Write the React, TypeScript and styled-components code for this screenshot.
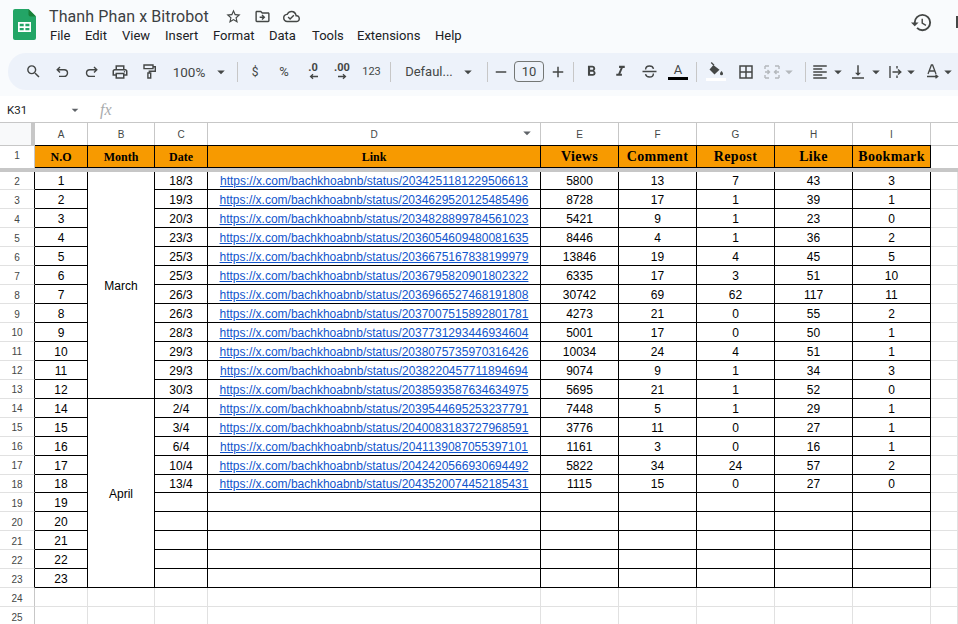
import React from 'react'
import styled, { createGlobalStyle } from 'styled-components'
import {
  MdSearch, MdOutlinePrint, MdArrowDropDown, MdRemove, MdAdd,
  MdFormatBold, MdFormatItalic, MdBorderAll, MdOutlineStarBorder,
  MdOutlineDriveFileMove, MdOutlineCloudDone, MdHistory, MdFormatAlignLeft, MdVerticalAlignBottom,
} from 'react-icons/md'

const GlobalStyle = createGlobalStyle`
  html, body { margin: 0; padding: 0; height: 100%; overflow: hidden; background: #f9fbfd; }
  body { font-family: Roboto, "Liberation Sans", sans-serif; }
`

const Page = styled.div`
  width: 958px;
  height: 624px;
  overflow: hidden;
  display: flex;
  flex-direction: column;
`

const TitleBar = styled.header`
  height: 53px;
  flex: none;
  display: flex;
  padding: 9px 0 0 13px;
  box-sizing: border-box;
`

const TitleBlock = styled.div`
  margin-left: 13px;
  display: flex;
  flex-direction: column;
`

const TitleRow = styled.div`
  display: flex;
  align-items: center;
  height: 14px;
  color: #444746;
`

const Title = styled.span`
  font-size: 16px;
  color: #3c4043;
  letter-spacing: 0.1px;
  width: 170px;
  white-space: nowrap;
`

const TitleIcon = styled.span`
  width: 29px;
  display: flex;
  justify-content: center;
  font-size: 17px;
`

const MenuRow = styled.nav`
  display: flex;
  margin-top: 5px;
  margin-left: 1px;
  height: 14px;
  align-items: center;
`

const MenuItem = styled.span<{ $w: number }>`
  width: ${({ $w }) => $w}px;
  font-size: 13px;
  color: #202124;
  white-space: nowrap;
`

const RightActions = styled.div`
  margin-left: auto;
  display: flex;
  align-items: center;
  height: 26px;
  color: #444746;
  font-size: 23px;
`

const CommentSliver = styled.span`
  width: 2px;
  height: 12px;
  background: #444746;
  margin-left: 23px;
`

const Toolbar = styled.div`
  flex: none;
  height: 37px;
  margin-left: 8px;
  padding-left: 10.5px;
  background: #edf2fa;
  border-radius: 18px 0 0 18px;
  display: flex;
  align-items: center;
  color: #444746;
  overflow: hidden;
`

const Tool = styled.span<{ $w?: number; $muted?: boolean; $size?: number }>`
  flex: none;
  width: ${({ $w }) => $w ?? 29}px;
  height: 24px;
  display: flex;
  align-items: center;
  justify-content: center;
  font-size: ${({ $size }) => $size ?? 18}px;
  color: ${({ $muted }) => ($muted ? '#b4b8bc' : '#444746')};
`

const ToolText = styled.span<{ $size?: number }>`
  font-size: ${({ $size }) => $size ?? 13}px;
  color: #444746;
  white-space: nowrap;
`

const ZoomText = styled(ToolText)`
  font-size: 13.5px;
  margin-left: 6px;
  margin-right: 7px;
`

const FontText = styled(ToolText)`
  margin-left: 5px;
  margin-right: 6px;
`

const Caret = styled(MdArrowDropDown)`
  font-size: 18px;
  flex: none;
`

const Sep = styled.span<{ $w?: number }>`
  flex: none;
  width: ${({ $w }) => $w ?? 7}px;
  display: flex;
  justify-content: center;
  &::before {
    content: '';
    width: 1px;
    height: 20px;
    background: #c7c7c7;
  }
`

const SizeBox = styled.span`
  width: 28px;
  height: 19px;
  border: 1px solid #747775;
  border-radius: 4px;
  display: flex;
  align-items: center;
  justify-content: center;
  font-size: 13px;
  color: #444746;
`

const ColorGlyph = styled.span`
  display: flex;
  flex-direction: column;
  align-items: center;
  line-height: 1;
`

const ColorBar = styled.span<{ $color: string }>`
  display: block;
  width: 20px;
  height: 3px;
  margin-top: 1px;
  background: ${({ $color }) => $color};
`

const DecimalGlyph = styled.span<{ $right?: boolean }>`
  display: flex;
  flex-direction: column;
  align-items: ${({ $right }) => ($right ? 'center' : 'flex-end')};
  font-size: 11px;
  font-weight: 700;
  line-height: 10px;
  color: #444746;
`

const FormulaBar = styled.div`
  flex: none;
  height: 26px;
  margin-top: 6px;
  padding-top: 1px;
  box-sizing: border-box;
  background: #fff;
  display: flex;
  align-items: center;
  padding-left: 7px;
`

const NameBox = styled.span`
  width: 60px;
  font-size: 11.5px;
  color: #202124;
`

const NameCaret = styled(MdArrowDropDown)`
  font-size: 16px;
  color: #5f6368;
`

const Fx = styled.span`
  margin-left: 17px;
  font-family: "Liberation Serif", serif;
  font-style: italic;
  font-size: 16px;
  color: #a8abad;
`

const SheetGrid = styled.div`
  flex: 1;
  display: grid;
  grid-template-columns: 35px 53px 67px 53px 333px 78px 78px 78px 78px 78px 27px;
  grid-template-rows: 23px 22.5px 4px;
  grid-auto-rows: 18.95px;
  background: #fff;
  overflow: hidden;
  font-family: "Liberation Sans", Arial, sans-serif;
`

const Corner = styled.div`
  background: #f8f9fa;
  border-top: 1px solid #c7c7c7;
  border-right: 4px solid #c7c7c7;
  box-sizing: border-box;
`

const ColHead = styled.div`
  position: relative;
  background: #fff;
  border-top: 1px solid #c7c7c7;
  border-right: 1px solid #c7c7c7;
  box-sizing: border-box;
  display: flex;
  align-items: center;
  justify-content: center;
  font-size: 10px;
  color: #444746;
`

const FilterCaret = styled(MdArrowDropDown)`
  position: absolute;
  right: 4px;
  top: 1px;
  font-size: 18px;
  color: #5f6368;
`

const RowLabel = styled.div<{ $dark?: boolean }>`
  background: #fff;
  box-sizing: border-box;
  padding-top: 2px;
  border-right: 1px solid ${({ $dark }) => ($dark ? '#000' : '#c7c7c7')};
  border-bottom: 1px solid #e1e1e1;
  display: flex;
  align-items: center;
  justify-content: center;
  font-size: 10px;
  color: #444746;
`

const RowOneLabel = styled(RowLabel)`
  border-top: 1px solid #c7c7c7;
  border-right: 1px solid #c7c7c7;
  border-bottom: none;
  padding-top: 0;
  padding-bottom: 3px;
`

const HeaderCell = styled.div<{ $size: number; $wide?: boolean }>`
  background: #f79a00;
  box-sizing: border-box;
  border-top: 1px solid #000;
  border-bottom: 1px solid #000;
  border-right: 1px solid #000;
  display: flex;
  align-items: center;
  justify-content: center;
  padding-top: 2px;
  font-family: "Liberation Serif", serif;
  font-weight: 700;
  font-size: ${({ $size }) => $size}px;
  letter-spacing: ${({ $wide }) => ($wide ? '0.35px' : '0')};
  color: #000;
  white-space: nowrap;
`

const Blank = styled.div`
  background: #fff;
  border-top: 1px solid #c7c7c7;
`

const FreezeBar = styled.div`
  grid-column: 1 / -1;
  background: #c7c7c7;
`

const Cell = styled.div`
  box-sizing: border-box;
  padding-top: 2px;
  border-right: 1px solid #000;
  border-bottom: 1px solid #000;
  display: flex;
  align-items: center;
  justify-content: center;
  font-size: 12px;
  color: #000;
  white-space: nowrap;
  overflow: hidden;
`

const MergedCell = styled(Cell)<{ $span: number }>`
  grid-row: span ${({ $span }) => $span};
`

const LinkText = styled.a`
  color: #1155cc;
  text-decoration: underline;
`

const EmptyCell = styled.div`
  box-sizing: border-box;
  border-right: 1px solid #e1e1e1;
  border-bottom: 1px solid #e1e1e1;
`

const SheetsLogo = () => (
  <svg width="23" height="31" viewBox="0 0 23 31">
    <path d="M2 0h13.5L23 7.5V29a2 2 0 0 1-2 2H2a2 2 0 0 1-2-2V2a2 2 0 0 1 2-2z" fill="#23a566" />
    <path d="M15.5 0L23 7.5h-5.5a2 2 0 0 1-2-2z" fill="#188038" />
    <path d="M5 13h13v10H5z M6.7 14.7v2.5h4v-2.5z M12.4 14.7v2.5h4v-2.5z M6.7 18.9v2.4h4v-2.4z M12.4 18.9v2.4h4v-2.4z" fill="#fff" fillRule="evenodd" />
  </svg>
)

const SmallArrow = ({ left }: { left?: boolean }) => (
  <svg width="9" height="7" viewBox="0 0 10 7" style={{ transform: left ? 'scaleX(-1)' : undefined }}>
    <path d="M0 3.5h8M5.5 1L8.3 3.5L5.5 6" fill="none" stroke="#444746" strokeWidth="1.4" />
  </svg>
)

const UndoIcon = ({ flip }: { flip?: boolean }) => (
  <svg width="13" height="12" viewBox="0 0 13 12" fill="none" stroke="#444746" strokeWidth="1.4" style={{ transform: flip ? 'scaleX(-1)' : undefined }}>
    <path d="M4 1L1.2 3.8L4 6.6M1.5 3.8h6.7a3.2 3.2 0 0 1 0 6.6H3" />
  </svg>
)

const PaintIcon = () => (
  <svg width="13" height="15" viewBox="0 0 13 15" fill="none" stroke="#444746" strokeWidth="1.4">
    <path d="M1 1h9v3.6H1zM10 2.8h2.3v4.4H6.3V9M4.9 9h2.8v5H4.9z" />
  </svg>
)

const StrikeIcon = () => (
  <svg width="15" height="13" viewBox="0 0 15 13" fill="none" stroke="#444746" strokeWidth="1.4">
    <path d="M0.5 6.5h14M3.6 4.6C3.6 2.4 5.4 1 7.5 1s3.6 1 4 2.8M11.4 8.4c0 2.2-1.8 3.6-3.9 3.6s-3.6-1-4-2.8" />
  </svg>
)

const MergeIcon = () => (
  <svg width="16" height="14" viewBox="0 0 16 14" fill="none" stroke="#b4b8bc" strokeWidth="1.4">
    <path d="M1 1h4M1 13h4M11 1h4M11 13h4M1 1v3M1 10v3M15 1v3M15 10v3M1 7h4M3.5 5L5.5 7L3.5 9M15 7h-4M12.5 5L10.5 7L12.5 9" />
  </svg>
)

const WrapIcon = () => (
  <svg width="13" height="14" viewBox="0 0 13 14" fill="none" stroke="#444746" strokeWidth="1.4">
    <path d="M1 1v12M8 1v2.5M8 10.5V13M3.5 7h8M9 4.5L11.8 7L9 9.5" />
  </svg>
)

const RotateIcon = () => (
  <svg width="13" height="15" viewBox="0 0 13 15" fill="none" stroke="#444746" strokeWidth="1.3">
    <path d="M2 10L5.4 1h1.2L10 10M3.3 7h5.4M1 12.5h10M9.5 10.8l2.2 1.7l-2.2 1.7" />
  </svg>
)

const FillIcon = () => (
  <svg width="16" height="15" viewBox="0 0 16 15">
    <path d="M3.2 0.5L6 3.3" fill="none" stroke="#444746" strokeWidth="1.3" />
    <path d="M5.4 3L11.5 7.8L6.5 12.5L1.5 7.5z" fill="#444746" />
    <path d="M13.5 9c1 1.3 1.5 2 1.5 2.8a1.5 1.5 0 0 1-3 0c0-.8.5-1.5 1.5-2.8z" fill="#444746" />
  </svg>
)

const menuItems: [string, number][] = [
  ['File', 35], ['Edit', 37], ['View', 43], ['Insert', 48], ['Format', 56],
  ['Data', 43], ['Tools', 45], ['Extensions', 78], ['Help', 40],
]

const columns = ['A', 'B', 'C', 'D', 'E', 'F', 'G', 'H', 'I']

const headers: [string, number, boolean][] = [
  ['N.O', 12, false], ['Month', 12, false], ['Date', 12, false], ['Link', 12, false],
  ['Views', 14, true], ['Comment', 14, true], ['Repost', 14, true], ['Like', 14, true], ['Bookmark', 14, true],
]

type Post = [string, string, number, number, number, number, number]

const posts: Post[] = [
  ['18/3', '2034251181229506613', 5800, 13, 7, 43, 3],
  ['19/3', '2034629520125485496', 8728, 17, 1, 39, 1],
  ['20/3', '2034828899784561023', 5421, 9, 1, 23, 0],
  ['23/3', '2036054609480081635', 8446, 4, 1, 36, 2],
  ['25/3', '2036675167838199979', 13846, 19, 4, 45, 5],
  ['25/3', '2036795820901802322', 6335, 17, 3, 51, 10],
  ['26/3', '2036966527468191808', 30742, 69, 62, 117, 11],
  ['26/3', '2037007515892801781', 4273, 21, 0, 55, 2],
  ['28/3', '2037731293446934604', 5001, 17, 0, 50, 1],
  ['29/3', '2038075735970316426', 10034, 24, 4, 51, 1],
  ['29/3', '2038220457711894694', 9074, 9, 1, 34, 3],
  ['30/3', '2038593587634634975', 5695, 21, 1, 52, 0],
  ['2/4', '2039544695253237791', 7448, 5, 1, 29, 1],
  ['3/4', '2040083183727968591', 3776, 11, 0, 27, 1],
  ['6/4', '2041139087055397101', 1161, 3, 0, 16, 1],
  ['10/4', '2042420566930694492', 5822, 34, 24, 57, 2],
  ['13/4', '2043520074452185431', 1115, 15, 0, 27, 0],
]

const monthAt: Record<number, [string, number]> = {
  0: ['March', 12],
  12: ['April', 10],
}

const rowNumbers = Array.from({ length: 22 }, (_, i) => i)

const App = () => (
  <Page>
    <GlobalStyle />
    <TitleBar>
      <SheetsLogo />
      <TitleBlock>
        <TitleRow>
          <Title>Thanh Phan x Bitrobot</Title>
          <TitleIcon><MdOutlineStarBorder /></TitleIcon>
          <TitleIcon><MdOutlineDriveFileMove /></TitleIcon>
          <TitleIcon><MdOutlineCloudDone /></TitleIcon>
        </TitleRow>
        <MenuRow>
          {menuItems.map(([label, w]) => <MenuItem key={label} $w={w}>{label}</MenuItem>)}
        </MenuRow>
      </TitleBlock>
      <RightActions>
        <MdHistory />
        <CommentSliver />
      </RightActions>
    </TitleBar>

    <Toolbar>
      <Tool $size={17}><MdSearch /></Tool>
      <Tool><UndoIcon /></Tool>
      <Tool><UndoIcon flip /></Tool>
      <Tool><MdOutlinePrint /></Tool>
      <Tool><PaintIcon /></Tool>
      <Tool $w={70}><ZoomText>100%</ZoomText><Caret /></Tool>
      <Sep />
      <Tool><ToolText $size={12}>$</ToolText></Tool>
      <Tool><ToolText>%</ToolText></Tool>
      <Tool><DecimalGlyph>.0<SmallArrow left /></DecimalGlyph></Tool>
      <Tool><DecimalGlyph $right>.00<SmallArrow /></DecimalGlyph></Tool>
      <Tool $w={30}><ToolText $size={11}>123</ToolText></Tool>
      <Sep />
      <Tool $w={90}><FontText>Defaul...</FontText><Caret /></Tool>
      <Sep />
      <Tool $w={21}><MdRemove /></Tool>
      <Tool $w={35}><SizeBox>10</SizeBox></Tool>
      <Tool $w={23}><MdAdd /></Tool>
      <Sep />
      <Tool $size={17}><MdFormatBold /></Tool>
      <Tool $size={17}><MdFormatItalic /></Tool>
      <Tool><StrikeIcon /></Tool>
      <Tool><ColorGlyph><ToolText>A</ToolText><ColorBar $color="#000" /></ColorGlyph></Tool>
      <Sep $w={8} />
      <Tool $w={31}><ColorGlyph><FillIcon /><ColorBar $color="#fff" /></ColorGlyph></Tool>
      <Tool><MdBorderAll /></Tool>
      <Tool $w={41} $muted><MergeIcon /><Caret /></Tool>
      <Sep />
      <Tool $w={40}><MdFormatAlignLeft /><Caret /></Tool>
      <Tool $w={37}><MdVerticalAlignBottom /><Caret /></Tool>
      <Tool $w={37}><WrapIcon /><Caret /></Tool>
      <Tool $w={37}><RotateIcon /><Caret /></Tool>
    </Toolbar>

    <FormulaBar>
      <NameBox>K31</NameBox>
      <NameCaret />
      <Fx>fx</Fx>
    </FormulaBar>

    <SheetGrid>
      <Corner />
      {columns.map((c) => (
        <ColHead key={c}>{c}{c === 'D' && <FilterCaret />}</ColHead>
      ))}
      <Blank />

      <RowOneLabel>1</RowOneLabel>
      {headers.map(([label, size, wide]) => (
        <HeaderCell key={label} $size={size} $wide={wide}>{label}</HeaderCell>
      ))}
      <Blank />

      <FreezeBar />

      {rowNumbers.map((i) => {
        const post = posts[i]
        const month = monthAt[i]
        return (
          <React.Fragment key={i}>
            <RowLabel $dark>{i + 2}</RowLabel>
            <Cell>{i < 12 ? i + 1 : i + 2}</Cell>
            {month && <MergedCell $span={month[1]}>{month[0]}</MergedCell>}
            {post ? (
              <>
                <Cell>{post[0]}</Cell>
                <Cell><LinkText>https://x.com/bachkhoabnb/status/{post[1]}</LinkText></Cell>
                {post.slice(2).map((v, k) => <Cell key={k}>{v}</Cell>)}
              </>
            ) : (
              Array.from({ length: 7 }, (_, k) => <Cell key={k} />)
            )}
            <EmptyCell />
          </React.Fragment>
        )
      })}

      {[24, 25].map((n) => (
        <React.Fragment key={n}>
          <RowLabel>{n}</RowLabel>
          {columns.map((c) => <EmptyCell key={c} />)}
          <EmptyCell />
        </React.Fragment>
      ))}
    </SheetGrid>
  </Page>
)

export default App
